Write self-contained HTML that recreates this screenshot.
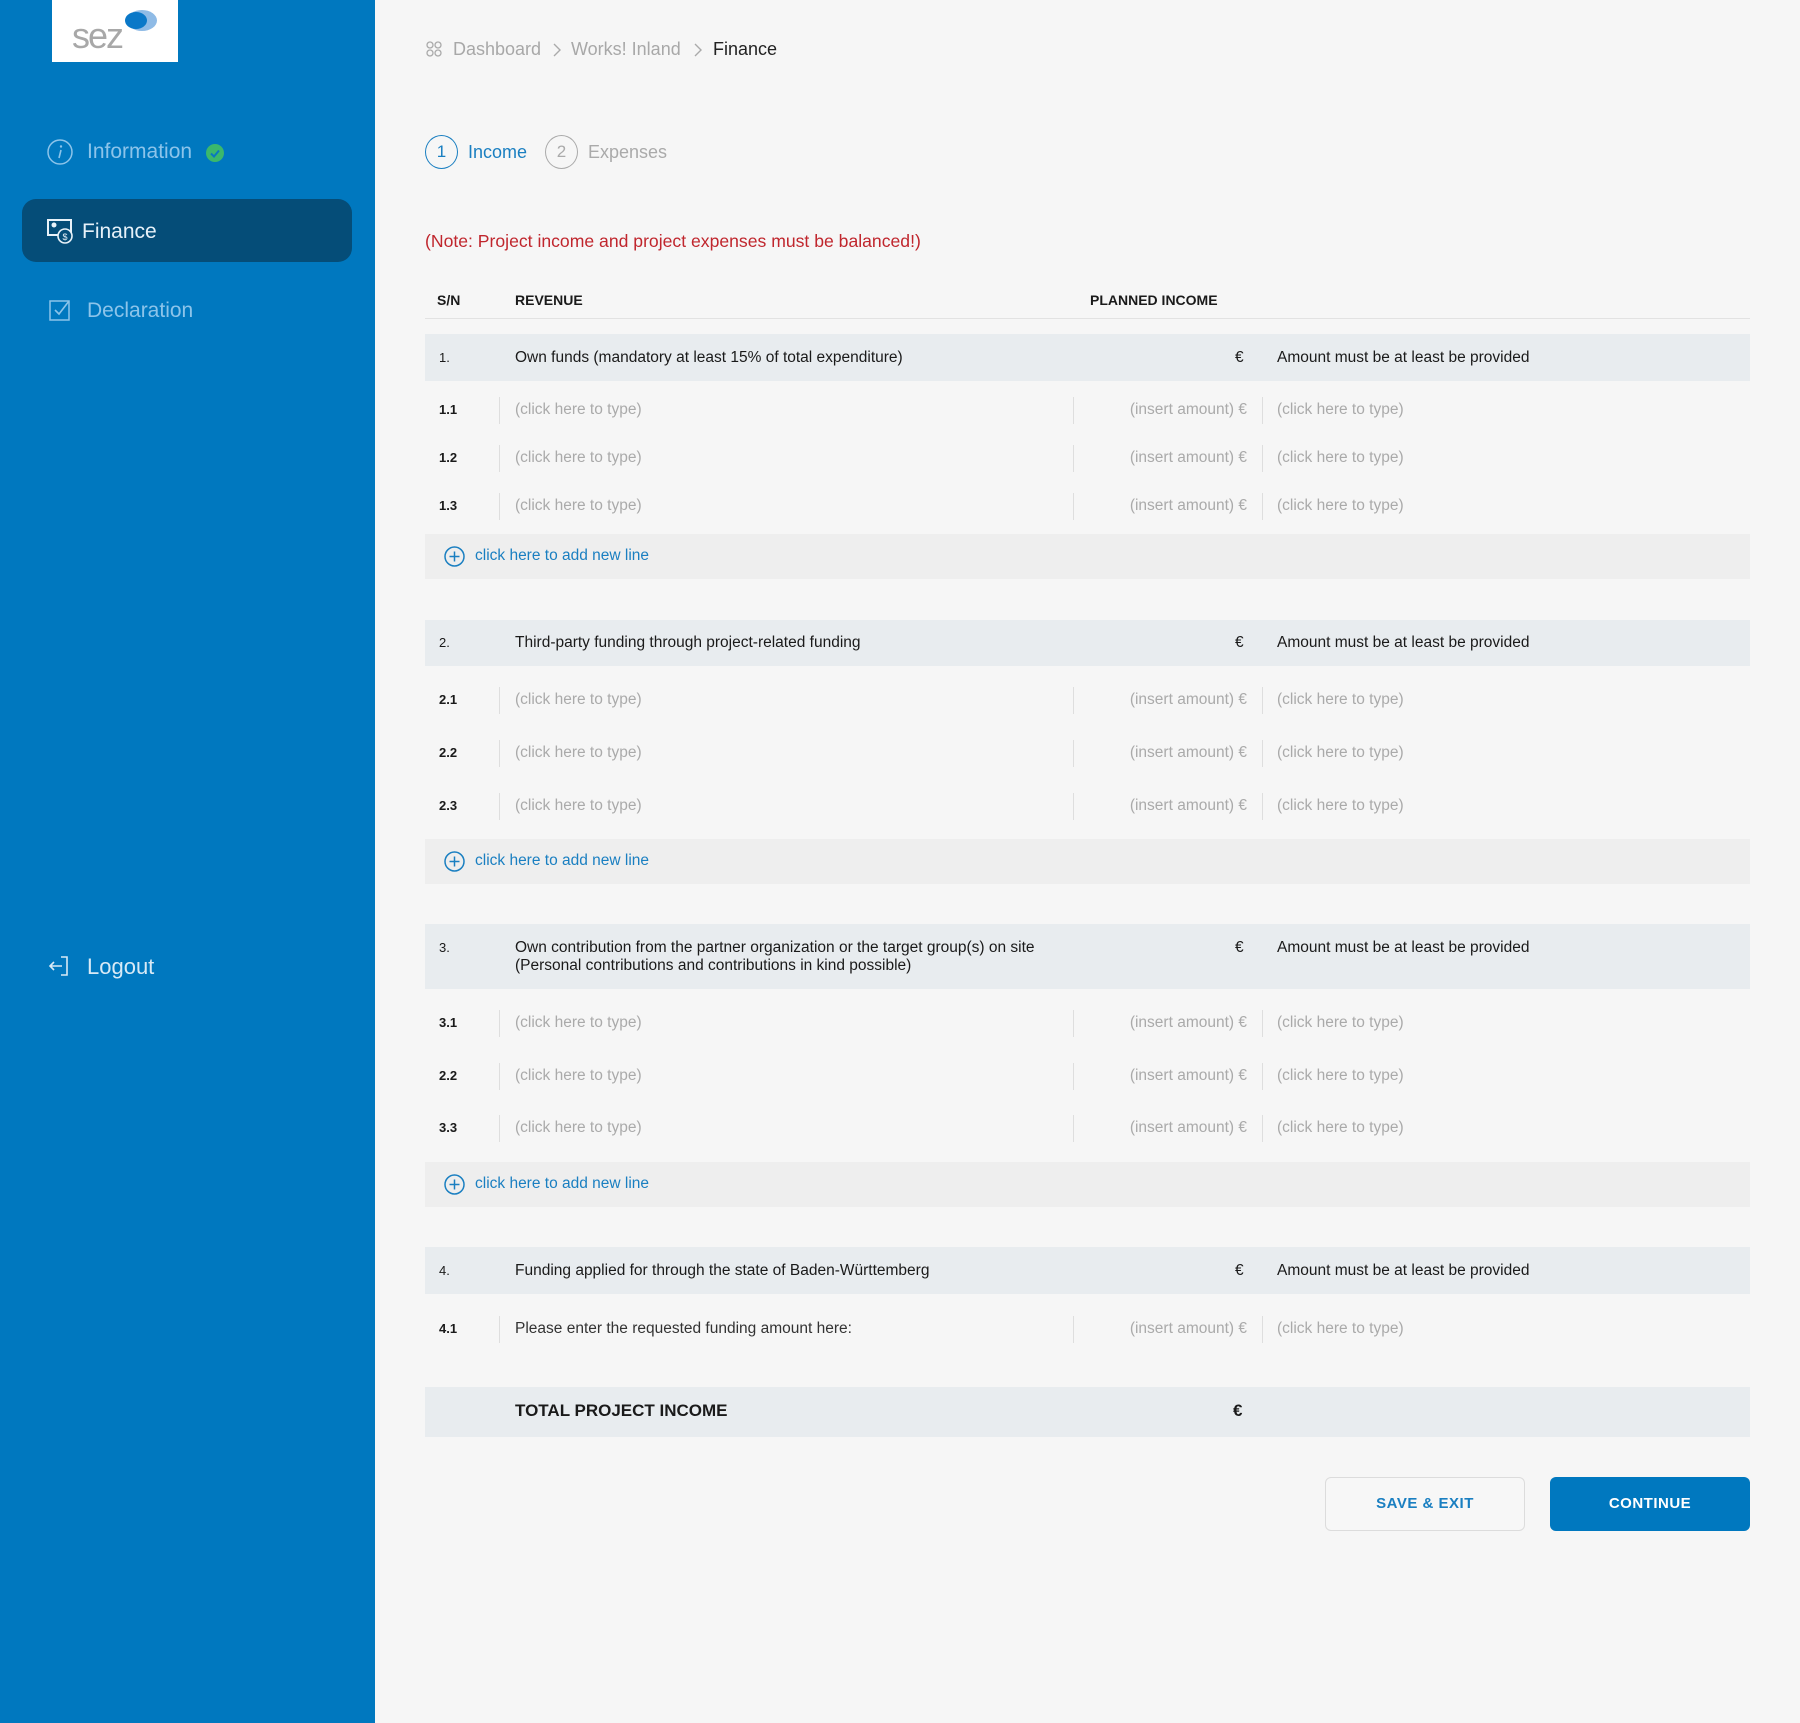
<!DOCTYPE html>
<html><head><meta charset="utf-8"><style>
*{margin:0;padding:0;box-sizing:border-box}
body{width:1800px;height:1723px;background:#f6f6f6;font-family:"Liberation Sans",sans-serif;position:relative;overflow:hidden;color:#1a1a1a}
.a{position:absolute}
#side{left:0;top:0;width:375px;height:1723px;background:#0078bf}
.nav{position:absolute;left:87px;font-size:21px;color:#8cc4ea}
.t{position:absolute;font-size:15.5px;white-space:nowrap;line-height:18px}
.r{left:1087px;width:160px;text-align:right}
.hdr{position:absolute;left:425px;width:1325px;background:#e8ecef}
.add{position:absolute;left:425px;width:1325px;height:45px;background:#eeeeee}
.vl{position:absolute;width:1px;height:27px;background:#dedede}
.g{color:#aaa}
.b{font-weight:bold}
</style></head><body>
<div id="side" class="a">
 <div class="a" style="left:52px;top:0;width:126px;height:62px;background:#fff">
  <span class="a" style="left:20px;top:16px;font-size:36px;color:#a8a8a8;letter-spacing:-2px;line-height:40px">sez</span>
  <div class="a" style="left:75px;top:10px;width:30px;height:21px;border-radius:50%;background:#8fbbe6"></div>
  <div class="a" style="left:73px;top:12px;width:22px;height:17px;border-radius:50%;background:#0a78c8"></div>
 </div>
 <svg class="a" style="left:47px;top:139px" width="26" height="26" viewBox="0 0 26 26"><circle cx="13" cy="13" r="12" fill="none" stroke="#8cc4ea" stroke-width="1.5"/><circle cx="14" cy="7.5" r="1.2" fill="#8cc4ea"/><path d="M14 11 L12 19" stroke="#8cc4ea" stroke-width="1.6"/></svg>
 <div class="nav" style="top:140px">Information</div>
 <svg class="a" style="left:206px;top:144px" width="18" height="18"><circle cx="9" cy="9" r="9" fill="#3bb86c"/><path d="M5 9.5l3 3 5-6" stroke="#0a78c0" stroke-width="2" fill="none"/></svg>
 <div class="a" style="left:22px;top:199px;width:330px;height:63px;border-radius:14px;background:#054d78"></div>
 <svg class="a" style="left:47px;top:218px" width="26" height="26" viewBox="0 0 26 26"><rect x="1" y="2" width="23" height="15" fill="none" stroke="#e8f2f9" stroke-width="2"/><circle cx="7" cy="7" r="2.5" fill="#e8f2f9"/><circle cx="18" cy="18" r="7" fill="#054d78" stroke="#e8f2f9" stroke-width="1.6"/><text x="18" y="22" font-size="9" fill="#e8f2f9" text-anchor="middle" font-family="Liberation Sans">$</text></svg>
 <div class="nav" style="top:220px;left:82px;color:#e6f1f9">Finance</div>
 <svg class="a" style="left:49px;top:297px" width="24" height="24"><rect x="1" y="4" width="19" height="19" fill="none" stroke="#8cc4ea" stroke-width="1.5"/><path d="M6 13l4 4 10-13" stroke="#8cc4ea" stroke-width="1.6" fill="none"/></svg>
 <div class="nav" style="top:299px">Declaration</div>
 <svg class="a" style="left:48px;top:955px" width="24" height="22"><path d="M13 2h6v18h-6" stroke="#d8eaf6" stroke-width="1.6" fill="none"/><path d="M2 11h12M6 7l-4 4 4 4" stroke="#d8eaf6" stroke-width="1.6" fill="none"/></svg>
 <div class="nav" style="top:954px;color:#d8eaf6;font-size:22px">Logout</div>
</div>

<svg class="a" style="left:426px;top:41px" width="16" height="16"><g fill="none" stroke="#aaa" stroke-width="1.3"><circle cx="4" cy="4" r="3"/><circle cx="12" cy="4" r="3"/><circle cx="4" cy="12" r="3"/><circle cx="12" cy="12" r="3"/></g></svg>
<div class="a" style="left:453px;top:39px;font-size:18px;color:#a8a8a8">Dashboard</div>
<svg class="a" style="left:552px;top:43px" width="10" height="14"><path d="M2 1l6 6-6 6" stroke="#aaa" stroke-width="1.4" fill="none"/></svg>
<div class="a" style="left:571px;top:39px;font-size:18px;color:#a8a8a8">Works! Inland</div>
<svg class="a" style="left:693px;top:43px" width="10" height="14"><path d="M2 1l6 6-6 6" stroke="#aaa" stroke-width="1.4" fill="none"/></svg>
<div class="a" style="left:713px;top:39px;font-size:18px;color:#222">Finance</div>

<div class="a" style="left:425px;top:135px;width:33px;height:34px;border:1.5px solid #1a7fc1;border-radius:50%;font-size:17px;color:#1a7fc1;text-align:center;line-height:31px">1</div>
<div class="a" style="left:468px;top:142px;font-size:18px;color:#1a7fc1">Income</div>
<div class="a" style="left:545px;top:135px;width:33px;height:34px;border:1.5px solid #aaa;border-radius:50%;font-size:17px;color:#aaa;text-align:center;line-height:31px">2</div>
<div class="a" style="left:588px;top:142px;font-size:18px;color:#aaa">Expenses</div>

<div class="a" style="left:425px;top:231px;font-size:17.6px;color:#c0262d">(Note: Project income and project expenses must be balanced!)</div>

<div class="t b" style="left:437px;top:291px;font-size:14px">S/N</div>
<div class="t b" style="left:515px;top:291px;font-size:14px">REVENUE</div>
<div class="t b" style="left:1090px;top:291px;font-size:14px">PLANNED INCOME</div>
<div class="a" style="left:425px;top:318px;width:1325px;height:1px;background:#e2e2e2"></div>

<!-- section 1 -->
<div class="hdr" style="top:334px;height:47px"></div>
<div class="t" style="left:439px;top:349px;font-size:13px">1.</div>
<div class="t" style="left:515px;top:349px">Own funds (mandatory at least 15% of total expenditure)</div>
<div class="t" style="left:1235px;top:349px">€</div>
<div class="t" style="left:1277px;top:349px">Amount must be at least be provided</div>

<div class="t b" style="left:439px;top:401px;font-size:13px">1.1</div><div class="vl" style="left:499px;top:397px"></div><div class="t g" style="left:515px;top:401px">(click here to type)</div><div class="vl" style="left:1073px;top:397px"></div><div class="t g r" style="top:401px">(insert amount) €</div><div class="vl" style="left:1262px;top:397px"></div><div class="t g" style="left:1277px;top:401px">(click here to type)</div>
<div class="t b" style="left:439px;top:449px;font-size:13px">1.2</div><div class="vl" style="left:499px;top:445px"></div><div class="t g" style="left:515px;top:449px">(click here to type)</div><div class="vl" style="left:1073px;top:445px"></div><div class="t g r" style="top:449px">(insert amount) €</div><div class="vl" style="left:1262px;top:445px"></div><div class="t g" style="left:1277px;top:449px">(click here to type)</div>
<div class="t b" style="left:439px;top:497px;font-size:13px">1.3</div><div class="vl" style="left:499px;top:493px"></div><div class="t g" style="left:515px;top:497px">(click here to type)</div><div class="vl" style="left:1073px;top:493px"></div><div class="t g r" style="top:497px">(insert amount) €</div><div class="vl" style="left:1262px;top:493px"></div><div class="t g" style="left:1277px;top:497px">(click here to type)</div>
<div class="add" style="top:534px"></div>
<svg class="a" style="left:444px;top:546px" width="21" height="21"><circle cx="10.5" cy="10.5" r="9.5" fill="none" stroke="#1a7fc1" stroke-width="1.5"/><path d="M10.5 5.5v10M5.5 10.5h10" stroke="#1a7fc1" stroke-width="1.5"/></svg>
<div class="t" style="left:475px;top:547px;font-size:15.5px;color:#1a7fc1">click here to add new line</div>

<!-- section 2 -->
<div class="hdr" style="top:620px;height:46px"></div>
<div class="t" style="left:439px;top:634px;font-size:13px">2.</div>
<div class="t" style="left:515px;top:634px">Third-party funding through project-related funding</div>
<div class="t" style="left:1235px;top:634px">€</div>
<div class="t" style="left:1277px;top:634px">Amount must be at least be provided</div>
<div class="t b" style="left:439px;top:691px;font-size:13px">2.1</div><div class="vl" style="left:499px;top:687px"></div><div class="t g" style="left:515px;top:691px">(click here to type)</div><div class="vl" style="left:1073px;top:687px"></div><div class="t g r" style="top:691px">(insert amount) €</div><div class="vl" style="left:1262px;top:687px"></div><div class="t g" style="left:1277px;top:691px">(click here to type)</div>
<div class="t b" style="left:439px;top:744px;font-size:13px">2.2</div><div class="vl" style="left:499px;top:740px"></div><div class="t g" style="left:515px;top:744px">(click here to type)</div><div class="vl" style="left:1073px;top:740px"></div><div class="t g r" style="top:744px">(insert amount) €</div><div class="vl" style="left:1262px;top:740px"></div><div class="t g" style="left:1277px;top:744px">(click here to type)</div>
<div class="t b" style="left:439px;top:797px;font-size:13px">2.3</div><div class="vl" style="left:499px;top:793px"></div><div class="t g" style="left:515px;top:797px">(click here to type)</div><div class="vl" style="left:1073px;top:793px"></div><div class="t g r" style="top:797px">(insert amount) €</div><div class="vl" style="left:1262px;top:793px"></div><div class="t g" style="left:1277px;top:797px">(click here to type)</div>
<div class="add" style="top:839px"></div>
<svg class="a" style="left:444px;top:851px" width="21" height="21"><circle cx="10.5" cy="10.5" r="9.5" fill="none" stroke="#1a7fc1" stroke-width="1.5"/><path d="M10.5 5.5v10M5.5 10.5h10" stroke="#1a7fc1" stroke-width="1.5"/></svg>
<div class="t" style="left:475px;top:852px;font-size:15.5px;color:#1a7fc1">click here to add new line</div>

<!-- section 3 -->
<div class="hdr" style="top:924px;height:65px"></div>
<div class="t" style="left:439px;top:939px;font-size:13px">3.</div>
<div class="t" style="left:515px;top:939px">Own contribution from the partner organization or the target group(s) on site</div>
<div class="t" style="left:515px;top:957px">(Personal contributions and contributions in kind possible)</div>
<div class="t" style="left:1235px;top:939px">€</div>
<div class="t" style="left:1277px;top:939px">Amount must be at least be provided</div>
<div class="t b" style="left:439px;top:1014px;font-size:13px">3.1</div><div class="vl" style="left:499px;top:1010px"></div><div class="t g" style="left:515px;top:1014px">(click here to type)</div><div class="vl" style="left:1073px;top:1010px"></div><div class="t g r" style="top:1014px">(insert amount) €</div><div class="vl" style="left:1262px;top:1010px"></div><div class="t g" style="left:1277px;top:1014px">(click here to type)</div>
<div class="t b" style="left:439px;top:1067px;font-size:13px">2.2</div><div class="vl" style="left:499px;top:1063px"></div><div class="t g" style="left:515px;top:1067px">(click here to type)</div><div class="vl" style="left:1073px;top:1063px"></div><div class="t g r" style="top:1067px">(insert amount) €</div><div class="vl" style="left:1262px;top:1063px"></div><div class="t g" style="left:1277px;top:1067px">(click here to type)</div>
<div class="t b" style="left:439px;top:1119px;font-size:13px">3.3</div><div class="vl" style="left:499px;top:1115px"></div><div class="t g" style="left:515px;top:1119px">(click here to type)</div><div class="vl" style="left:1073px;top:1115px"></div><div class="t g r" style="top:1119px">(insert amount) €</div><div class="vl" style="left:1262px;top:1115px"></div><div class="t g" style="left:1277px;top:1119px">(click here to type)</div>
<div class="add" style="top:1162px"></div>
<svg class="a" style="left:444px;top:1174px" width="21" height="21"><circle cx="10.5" cy="10.5" r="9.5" fill="none" stroke="#1a7fc1" stroke-width="1.5"/><path d="M10.5 5.5v10M5.5 10.5h10" stroke="#1a7fc1" stroke-width="1.5"/></svg>
<div class="t" style="left:475px;top:1175px;font-size:15.5px;color:#1a7fc1">click here to add new line</div>

<!-- section 4 -->
<div class="hdr" style="top:1247px;height:47px"></div>
<div class="t" style="left:439px;top:1262px;font-size:13px">4.</div>
<div class="t" style="left:515px;top:1262px">Funding applied for through the state of Baden-Württemberg</div>
<div class="t" style="left:1235px;top:1262px">€</div>
<div class="t" style="left:1277px;top:1262px">Amount must be at least be provided</div>
<div class="t b" style="left:439px;top:1320px;font-size:13px">4.1</div><div class="vl" style="left:499px;top:1316px"></div><div class="t" style="left:515px;top:1320px;color:#333">Please enter the requested funding amount here:</div><div class="vl" style="left:1073px;top:1316px"></div><div class="t g r" style="top:1320px">(insert amount) €</div><div class="vl" style="left:1262px;top:1316px"></div><div class="t g" style="left:1277px;top:1320px">(click here to type)</div>

<div class="hdr" style="top:1387px;height:50px"></div>
<div class="t b" style="left:515px;top:1402px;font-size:17px">TOTAL PROJECT INCOME</div>
<div class="t b" style="left:1233px;top:1402px;font-size:17px">€</div>

<div class="a" style="left:1325px;top:1477px;width:200px;height:54px;border:1px solid #dcdcdc;border-radius:6px;background:#f7f7f7;color:#1a7fc1;font-weight:bold;font-size:15px;text-align:center;line-height:52px;letter-spacing:0.5px">SAVE &amp; EXIT</div>
<div class="a" style="left:1550px;top:1477px;width:200px;height:54px;border-radius:6px;background:#0078bf;color:#fff;font-weight:bold;font-size:15px;text-align:center;line-height:54px;letter-spacing:0.5px">CONTINUE</div>
</body></html>
